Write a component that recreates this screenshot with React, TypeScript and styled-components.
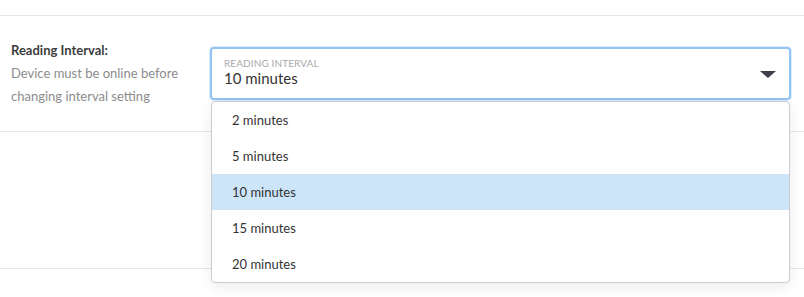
import React from "react";
import styled, { createGlobalStyle } from "styled-components";

const options = ["2 minutes", "5 minutes", "10 minutes", "15 minutes", "20 minutes"];

const App: React.FC = () => {
  const selected = "10 minutes";

  return (
    <>
      <GlobalStyle />
      <Page>
        <Section>
          <Info>
            <Title>Reading Interval:</Title>
            <Description>
              Device must be online before
              <br />
              changing interval setting
            </Description>
          </Info>

          <SelectWrapper>
            <SelectBox>
              <SelectText>
                <SelectLabel>READING INTERVAL</SelectLabel>
                <SelectValue>{selected}</SelectValue>
              </SelectText>
              <Caret />
            </SelectBox>

            <Menu>
              {options.map((o) => (
                <MenuItem key={o} $active={o === selected}>
                  {o}
                </MenuItem>
              ))}
            </Menu>
          </SelectWrapper>
        </Section>
        <EmptySection />
      </Page>
    </>
  );
};

export default App;

// ===== styled-components =====

const GlobalStyle = createGlobalStyle`
  body {
    margin: 0;
    background: #ffffff;
    font-family: "Lato", "Liberation Sans", sans-serif;
  }
`;

const Page = styled.div`
  padding-top: 15px;
  height: 282px;
`;

const Section = styled.div`
  display: flex;
  align-items: flex-start;
  box-sizing: border-box;
  height: 117px;
  border-top: 1px solid #e6e6e6;
  border-bottom: 1px solid #e6e6e6;
  padding: 23px 13px 0 11px;
`;

const Info = styled.div`
  width: 199px;
  flex-shrink: 0;
  display: flex;
  flex-direction: column;
`;

const Title = styled.div`
  font-size: 13px;
  line-height: 23px;
  font-weight: 700;
  color: #3c3c3c;
`;

const Description = styled.div`
  font-size: 13px;
  line-height: 23px;
  color: #8c8c8c;
`;

const SelectWrapper = styled.div`
  position: relative;
  flex: 1;
  margin-top: 8px;
`;

const SelectBox = styled.div`
  height: 53px;
  box-sizing: border-box;
  border: 2px solid #93c4f4;
  border-radius: 4px;
  box-shadow: 0 0 0 1px rgba(147, 196, 244, 0.35);
  display: flex;
  align-items: center;
  justify-content: space-between;
  padding: 0 13px 0 12px;
`;

const SelectText = styled.div`
  display: flex;
  flex-direction: column;
  margin-top: -3px;
`;

const SelectLabel = styled.span`
  font-size: 10px;
  line-height: 12px;
  color: #a9a9a9;
  letter-spacing: 0.1px;
`;

const SelectValue = styled.span`
  font-size: 15px;
  line-height: 18px;
  color: #333333;
`;

const Caret = styled.div`
  width: 0;
  height: 0;
  border-left: 8px solid transparent;
  border-right: 8px solid transparent;
  border-top: 7px solid #3d4048;
  margin-top: 2px;
`;

const Menu = styled.div`
  position: absolute;
  top: calc(100% + 1px);
  left: 1px;
  right: 1px;
  background: #ffffff;
  border: 1px solid #c9ced4;
  border-radius: 4px;
  box-shadow: 0 4px 14px rgba(0, 0, 0, 0.08);
  overflow: hidden;
  z-index: 2;
`;

const MenuItem = styled.div<{ $active: boolean }>`
  height: 36px;
  display: flex;
  align-items: center;
  padding-left: 20px;
  font-size: 13px;
  color: #333333;
  background: ${(p) => (p.$active ? "#cce5f8" : "transparent")};
`;

const EmptySection = styled.div`
  height: 136px;
  border-bottom: 1px solid #e6e6e6;
`;
